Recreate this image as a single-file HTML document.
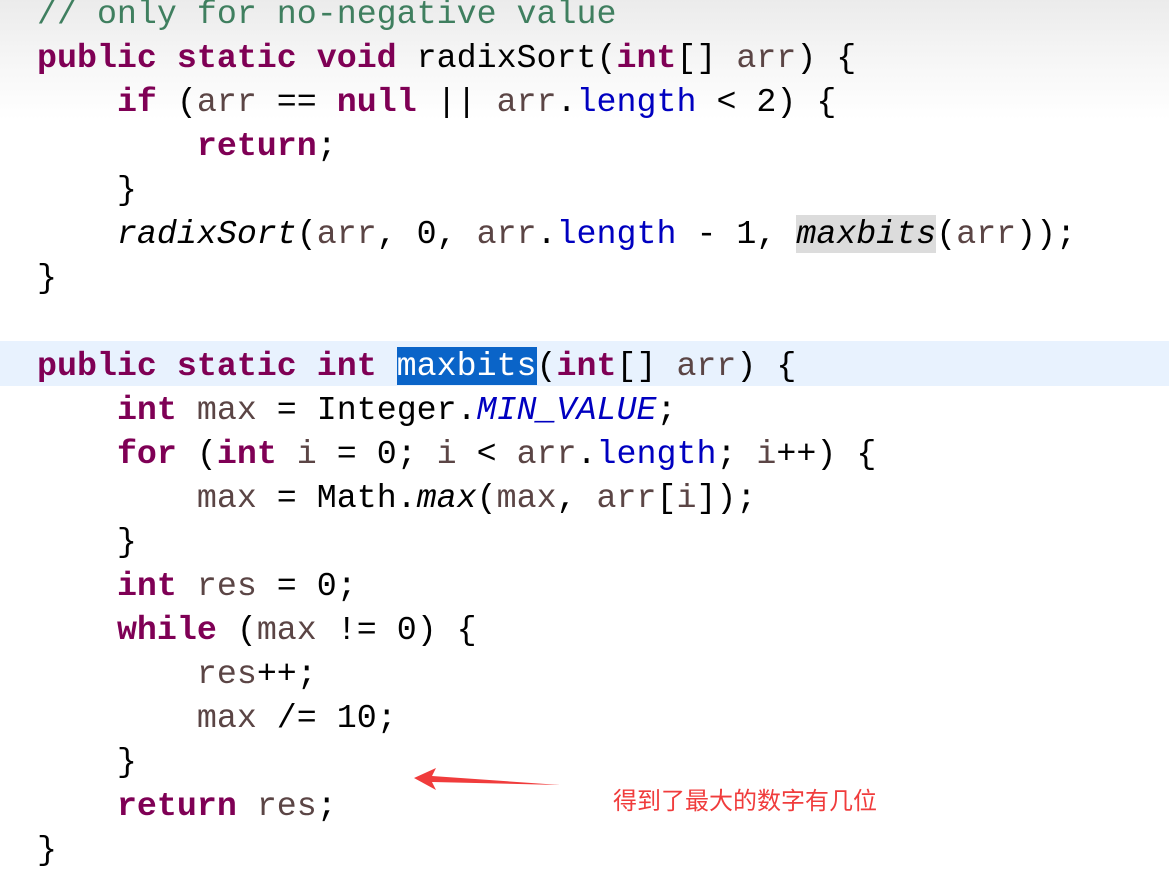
<html><head><style>
body{margin:0;width:1169px;height:873px;overflow:hidden;background:linear-gradient(#ebebeb 0,#f6f6f6 60px,#fff 120px);position:relative}
.hl{position:absolute;left:0;top:341px;width:1169px;height:45px;background:#e8f2fe}
pre{position:absolute;left:37px;top:-8px;margin:0;font:33.3px/44px "Liberation Mono",monospace;color:#000}
.k{color:#7f0055;font-weight:bold}.v{color:#5b4545}.f{color:#0000c0}.c{color:#3f7f5f}
.i{font-style:italic}.sel{background:#0a64c8;color:#fff}.g{background:#dcdcdc}
.note{position:absolute;left:613px;top:781px;font:24px "Liberation Sans","Noto Sans CJK SC",sans-serif;color:#f03c3c}
</style></head><body>
<div class="hl"></div>
<pre><span class="c">// only for no-negative value</span>
<span class="k">public static void</span> radixSort(<span class="k">int</span>[] <span class="v">arr</span>) {
    <span class="k">if</span> (<span class="v">arr</span> == <span class="k">null</span> || <span class="v">arr</span>.<span class="f">length</span> &lt; 2) {
        <span class="k">return</span>;
    }
    <span class="i">radixSort</span>(<span class="v">arr</span>, 0, <span class="v">arr</span>.<span class="f">length</span> - 1, <span class="i g">maxbits</span>(<span class="v">arr</span>));
}

<span class="k">public static int</span> <span class="sel">maxbits</span>(<span class="k">int</span>[] <span class="v">arr</span>) {
    <span class="k">int</span> <span class="v">max</span> = Integer.<span class="f i">MIN_VALUE</span>;
    <span class="k">for</span> (<span class="k">int</span> <span class="v">i</span> = 0; <span class="v">i</span> &lt; <span class="v">arr</span>.<span class="f">length</span>; <span class="v">i</span>++) {
        <span class="v">max</span> = Math.<span class="i">max</span>(<span class="v">max</span>, <span class="v">arr</span>[<span class="v">i</span>]);
    }
    <span class="k">int</span> <span class="v">res</span> = 0;
    <span class="k">while</span> (<span class="v">max</span> != 0) {
        <span class="v">res</span>++;
        <span class="v">max</span> /= 10;
    }
    <span class="k">return</span> <span class="v">res</span>;
}</pre>
<svg style="position:absolute;left:410px;top:765px" width="160" height="30"><polygon points="4,13 26,3 22,11 150,20 22,17 26,25" fill="#f03c3c"/></svg>
<div class="note">得到了最大的数字有几位</div>
</body></html>
